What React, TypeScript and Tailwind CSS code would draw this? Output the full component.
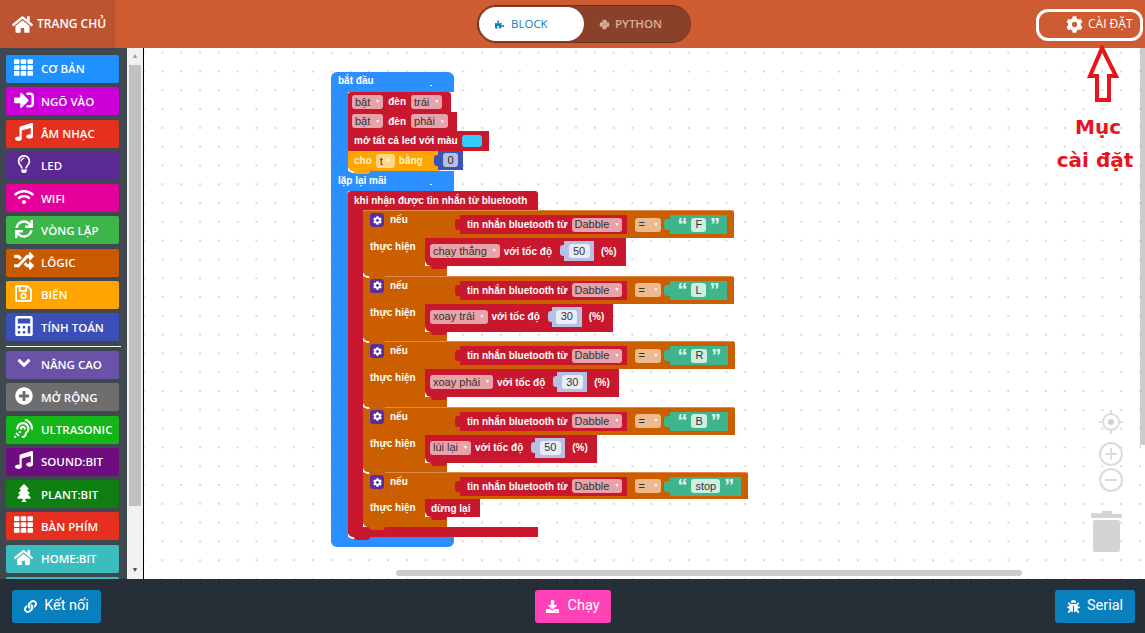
import type { ReactNode } from "react";
import {
  FaAngleDown,
  FaAssistiveListeningSystems,
  FaBug,
  FaCalculator,
  FaCog,
  FaDownload,
  FaHome,
  FaLink,
  FaMusic,
  FaPlusCircle,
  FaPuzzlePiece,
  FaPython,
  FaRandom,
  FaRegLightbulb,
  FaRegSave,
  FaSignInAlt,
  FaSync,
  FaTh,
  FaTree,
  FaWifi,
} from "react-icons/fa";

const menuTop = [
  { label: "CƠ BẢN", color: "bg-[#1e90ff]", icon: <FaTh className="text-[19px]" /> },
  { label: "NGÕ VÀO", color: "bg-[#cc00d6]", icon: <FaSignInAlt className="text-[20px]" /> },
  { label: "ÂM NHẠC", color: "bg-[#e6301f]", icon: <FaMusic className="text-[18px]" /> },
  { label: "LED", color: "bg-[#5a2a92]", icon: <FaRegLightbulb className="text-[18px]" /> },
  { label: "WIFI", color: "bg-[#e6009b]", icon: <FaWifi className="text-[20px]" /> },
  { label: "VÒNG LẶP", color: "bg-[#3cb54a]", icon: <FaSync className="text-[18px]" /> },
  { label: "LÔGIC", color: "bg-[#c95a00]", icon: <FaRandom className="text-[20px]" /> },
  { label: "BIẾN", color: "bg-[#ffa400]", icon: <FaRegSave className="text-[19px]" /> },
  { label: "TÍNH TOÁN", color: "bg-[#3a50b8]", icon: <FaCalculator className="text-[20px]" /> },
];

const menuBottom = [
  { label: "NÂNG CAO", color: "bg-[#6a52a8]", icon: <FaAngleDown className="text-[20px]" /> },
  { label: "MỞ RỘNG", color: "bg-[#6e6e6e]", icon: <FaPlusCircle className="text-[18px]" /> },
  { label: "ULTRASONIC", color: "bg-[#13b518]", icon: <FaAssistiveListeningSystems className="text-[19px]" /> },
  { label: "SOUND:BIT", color: "bg-[#6f0d80]", icon: <FaMusic className="text-[18px]" /> },
  { label: "PLANT:BIT", color: "bg-[#0e7d12]", icon: <FaTree className="text-[18px]" /> },
  { label: "BÀN PHÍM", color: "bg-[#e6301f]", icon: <FaTh className="text-[19px]" /> },
  { label: "HOME:BIT", color: "bg-[#3dbcc0]", icon: <FaHome className="text-[19px]" /> },
  { label: "", color: "bg-[#3dbcc0]", icon: null },
];

const conditions = [
  { letter: "F", action: "chạy thẳng", speed: "50" },
  { letter: "L", action: "xoay trái", speed: "30" },
  { letter: "R", action: "xoay phải", speed: "30" },
  { letter: "B", action: "lùi lại", speed: "50" },
];

function MenuItem({ label, color, icon }: { label: string; color: string; icon: ReactNode }) {
  return (
    <div className={`flex h-[28px] w-[113px] shrink-0 items-center rounded-[2px] text-white ${color}`}>
      <span className="flex w-[35px] justify-center pb-[3px]">{icon}</span>
      <span className="text-[11.5px] font-semibold">{label}</span>
    </div>
  );
}

// cai mau noi ben duoi moi khoi, kem duong cong trang o goc trai
function Notch({ color }: { color: string }) {
  return (
    <>
      <span className="absolute left-0 top-[calc(100%-3px)] h-[5px] w-[16px] rounded-bl-[6px] border-b-2 border-l border-white" />
      <span className={`absolute left-[6px] top-full z-10 h-[3px] w-[16px] rounded-b-[4px] ${color}`} />
    </>
  );
}

function Field({ children, className = "bg-[#e8a3aa]" }: { children: ReactNode; className?: string }) {
  return (
    <span className={`flex h-[14px] items-center gap-[5px] rounded-[3px] px-[3px] text-[11px] font-normal text-[#333] ${className}`}>
      {children}
      <span className="text-[5px] text-white">▼</span>
    </span>
  );
}

function NumberInput({ value }: { value: string }) {
  return (
    <span className="relative ml-[8px] flex h-[20px] w-[30px] items-center justify-center bg-[#b6bfe6]">
      <span className="absolute left-[-4px] top-[4px] h-[11px] w-[4px] rounded-l-[3px] bg-[#b6bfe6]" />
      <span className="flex h-[14px] w-[21px] items-center justify-center rounded-[3px] bg-[#e9edf8] text-[11px] font-normal text-[#333]">
        {value}
      </span>
    </span>
  );
}

function Statement({ children }: { children: ReactNode }) {
  return (
    <div className="relative flex h-[28px] w-fit items-center gap-[4px] rounded-bl-[6px] bg-[#c9182d] pb-[2px] pl-[5px] pr-[9px]">
      {children}
      <Notch color="bg-[#c9182d]" />
    </div>
  );
}

function IfBlock({ text, children, short }: { text: string; children: ReactNode; short?: boolean }) {
  return (
    <div className="flex flex-col">
      <div
        className={`flex w-fit items-center rounded-tr-[2px] border-t border-[#e0894a] bg-[#cb5f00] pr-[7px] ${short ? "h-[27px]" : "h-[28px]"}`}
      >
        <div className="flex h-full w-[92px] items-start gap-[6px] pl-[7px] pt-[2px]">
          <span className="flex h-[14px] w-[14px] items-center justify-center rounded-[3px] bg-[#5b2ea0] text-[9px] text-white">
            <FaCog />
          </span>
          <span className="leading-[13px]">nếu</span>
        </div>
        <span className="h-[11px] w-[5px] rounded-l-[3px] bg-[#c9182d]" />
        <div className="flex h-[19px] items-center gap-[4px] bg-[#c9182d] pl-[7px] pr-[5px]">
          tin nhắn bluetooth từ
          <Field>Dabble</Field>
        </div>
        <span className="ml-[8px]">
          <Field className="w-[26px] justify-between bg-[#edb98f]">=</Field>
        </span>
        <span className="ml-[3px] h-[11px] w-[6px] rounded-l-[3px] bg-[#3fb58e]" />
        <div className="flex h-[19px] items-center gap-[4px] bg-[#3fb58e] px-[7px] text-[#e8f7f1]">
          <span className="text-[20px] leading-[22px] font-bold">“</span>
          <span className="flex h-[14px] items-center rounded-[3px] bg-[#cfeee2] px-[4px] text-[11px] font-normal text-[#333]">
            {text}
          </span>
          <span className="text-[20px] leading-[22px] font-bold">”</span>
        </div>
      </div>
      <div className="flex">
        <div className="w-[62px] bg-[#cb5f00] pl-[7px] pt-[2px] leading-[14px]">thực hiện</div>
        {children}
      </div>
      <div className={`relative w-[84px] rounded-bl-[4px] bg-[#cb5f00] ${short ? "h-[10px]" : "h-[9.5px]"}`}>
        <Notch color="bg-[#cb5f00]" />
      </div>
    </div>
  );
}

function BlockStack() {
  return (
    <div className="absolute left-[187px] top-[24px] flex flex-col whitespace-nowrap font-['Liberation_Sans',sans-serif] text-[10px] font-bold text-white">
      <div className="flex h-[20px] w-[123px] items-center rounded-t-[6px] bg-[#2b8fff] pb-[3px] pl-[7px]">
        bắt đầu
        <span className="ml-auto mr-[22px] mt-[9px] h-px w-[2px] bg-white" />
      </div>
      <div className="flex">
        <div className="w-[17px] bg-[#2b8fff]" />
        <div className="flex flex-col">
          <div className="flex h-[19.5px] w-[103px] items-center gap-[5px] rounded-t-[3px] bg-[#c9182d] pl-[4px]">
            <Field>bật</Field>
            đèn
            <Field>trái</Field>
          </div>
          <div className="flex h-[19.5px] w-[109px] items-center gap-[5px] bg-[#c9182d] pl-[4px]">
            <Field>bật</Field>
            đèn
            <Field>phải</Field>
          </div>
          <div className="flex h-[19.5px] w-[141px] items-center gap-[4px] bg-[#c9182d] pl-[6px]">
            mở tất cả led với màu
            <span className="h-[12px] w-[20px] rounded-[3px] bg-[#33ccff]" />
          </div>
          <div className="relative flex h-[20.5px] w-[93px] items-center gap-[4px] rounded-b-[3px] bg-[#ffa600] pl-[6px] text-[#fff2cc]">
            cho
            <span className="flex h-[14px] items-center gap-[3px] rounded-[3px] bg-[#ffd88a] px-[4px] text-[11px] font-normal text-[#333]">
              t<span className="text-[5px] text-white">▼</span>
            </span>
            bằng
            <Notch color="bg-[#ffa600]" />
            <span className="absolute left-[90px] top-[0px] flex h-[19px] w-[25px] items-center justify-center bg-[#3f51b5]">
              <span className="absolute left-[-4px] top-[4px] h-[11px] w-[4px] rounded-l-[3px] bg-[#3f51b5]" />
              <span className="flex h-[14px] w-[15px] items-center justify-center rounded-[3px] bg-[#b6bfe6] text-[11px] font-normal text-[#222]">
                0
              </span>
            </span>
          </div>
        </div>
      </div>
      <div className="flex h-[20px] w-[123px] items-center bg-[#2b8fff] pb-[2px] pl-[7px]">
        lặp lại mãi
        <span className="ml-auto mr-[22px] mt-[9px] h-px w-[2px] bg-white" />
      </div>
      <div className="flex">
        <div className="w-[17px] bg-[#2b8fff]" />
        <div className="flex flex-col">
          <div className="flex h-[19px] w-[190px] items-center rounded-t-[3px] bg-[#c9182d] pl-[6px]">
            khi nhận được tin nhắn từ bluetooth
          </div>
          <div className="flex">
            <div className="w-[15px] bg-[#c9182d]" />
            <div className="flex flex-col">
              {conditions.map((c) => (
                <IfBlock key={c.letter} text={c.letter}>
                  <Statement>
                    <Field>{c.action}</Field>
                    với tốc độ
                    <NumberInput value={c.speed} />
                    <span className="ml-[3px]">(%)</span>
                  </Statement>
                </IfBlock>
              ))}
              <IfBlock text="stop" short>
                <div className="relative flex h-[18px] w-[55px] items-center rounded-bl-[6px] bg-[#c9182d] pl-[6px]">
                  dừng lại
                  <Notch color="bg-[#c9182d]" />
                </div>
              </IfBlock>
            </div>
          </div>
          <div className="relative h-[10px] w-[190px] rounded-bl-[4px] bg-[#c9182d]">
            <Notch color="bg-[#c9182d]" />
          </div>
        </div>
      </div>
      <div className="h-[10px] w-[123px] rounded-b-[6px] bg-[#2b8fff]" />
    </div>
  );
}

function WorkspaceControls() {
  return (
    <svg className="absolute left-[947px] top-[360px]" width="50" height="146" viewBox="0 0 50 146" fill="none">
      <g stroke="#dcdcdc" strokeWidth="2">
        <circle cx="20" cy="14" r="8" />
        <path d="M20 2v5M20 21v5M8 14h5M27 14h5" />
        <circle cx="20" cy="46" r="11" />
        <path d="M14 46h12M20 40v12" />
        <circle cx="20" cy="72" r="11" />
        <path d="M14 72h12" />
      </g>
      <circle cx="20" cy="14" r="3" fill="#d0d0d0" />
      <path d="M0 105l31 1v4H0zM11 103h10v3H11z" fill="#d4d4d4" />
      <rect x="2" y="112" width="27" height="32" rx="2" fill="#d4d4d4" />
    </svg>
  );
}

export default function App() {
  return (
    <div className="relative flex h-[633px] w-[1145px] flex-col overflow-hidden bg-white font-['Open_Sans',sans-serif]">
      <header className="flex h-[48px] shrink-0 items-center bg-[#cf5b33] text-white">
        <div className="flex h-full w-[115px] items-center gap-[4px] bg-[#bd5431] pl-[12px] text-[12px] font-semibold">
          <FaHome className="text-[21px]" />
          TRANG CHỦ
        </div>
        <div className="flex flex-1 justify-center">
          <div className="flex h-[38px] w-[214px] items-center rounded-full border border-[#6f3320] bg-[#8a4129] pl-[1px] text-[11.5px]">
            <div className="flex h-[34px] w-[105px] items-center gap-[7px] rounded-full bg-white pl-[16px] text-[#0a7fbd]">
              <FaPuzzlePiece className="text-[9px]" />
              BLOCK
            </div>
            <div className="flex items-center gap-[5px] pl-[15px] font-semibold text-[#d9b0a0]">
              <FaPython className="text-[11px]" />
              PYTHON
            </div>
          </div>
        </div>
        <div className="flex w-[92px] items-center gap-[5px] pl-[13px] text-[12px]">
          <FaCog className="text-[17px]" />
          CÀI ĐẶT
        </div>
      </header>

      <main className="flex min-h-0 flex-1">
        <aside className="flex w-[127px] shrink-0 flex-col gap-[4.3px] overflow-hidden bg-[#3e484e] pl-[6px] pt-[7px]">
          {menuTop.map((m) => (
            <MenuItem key={m.label} {...m} />
          ))}
          <div className="h-px w-[115px] shrink-0 bg-white" />
          {menuBottom.map((m) => (
            <MenuItem key={m.label} {...m} />
          ))}
        </aside>

        <div className="flex w-[17px] shrink-0 flex-col border-r border-black bg-[#f1f1f1]">
          <div className="flex h-[17px] items-center justify-center text-[7px] text-[#a0a0a0]">▲</div>
          <div className="mx-[2px] h-[441px] bg-[#c1c1c1]" />
          <div className="mt-auto flex h-[17px] items-center justify-center text-[7px] text-[#505050]">▼</div>
        </div>

        <div className="relative flex-1 overflow-hidden bg-white bg-[radial-gradient(circle_at_1px_1px,#d8d8d8_1px,transparent_1.2px)] bg-[size:18.8px_18.8px] bg-[position:17.5px_3.7px]">
          <BlockStack />
          <WorkspaceControls />
          <div className="absolute right-0 top-0 h-[397px] w-[5px] bg-[#cccccc]" />
          <div className="absolute bottom-[3px] left-[252px] h-[6px] w-[626px] rounded-full bg-[#cccccc]" />
        </div>
      </main>

      <footer className="flex h-[54px] shrink-0 items-center justify-between bg-[#262f38] pl-[12px] pr-[10px] font-['Roboto',sans-serif] text-[14.5px] text-white">
        <button className="flex h-[33px] w-[89px] items-center justify-center gap-[7px] rounded-[3px] bg-[#0a7fbd]">
          <FaLink className="text-[13px]" />
          Kết nối
        </button>
        <button className="mr-[10px] flex h-[33px] w-[76px] items-center justify-center gap-[8px] rounded-[3px] bg-[#ff42b8]">
          <FaDownload className="text-[13px]" />
          Chạy
        </button>
        <button className="flex h-[33px] w-[80px] items-center justify-center gap-[7px] rounded-[3px] bg-[#0a7fbd]">
          <FaBug className="text-[13px]" />
          Serial
        </button>
      </footer>

      {/* phan chu thich ve tay tren anh */}
      <div className="absolute left-[1036px] top-[9px] h-[32px] w-[107px] rounded-[12px] border-[3px] border-white" />
      <svg className="absolute left-[1087px] top-[45px]" width="32" height="58" viewBox="0 0 32 58" fill="none">
        <path d="M15 3L3 31h7v24h12V31h7z" stroke="#e8141c" strokeWidth="4" />
      </svg>
      <div className="absolute left-[1050px] top-[111px] w-[90px] text-center font-['DejaVu_Sans',sans-serif] text-[20px] font-bold leading-[33px] text-[#e8141c]">
        <span className="ml-[6px]">Mục</span>
        <br />
        cài đặt
      </div>
    </div>
  );
}
